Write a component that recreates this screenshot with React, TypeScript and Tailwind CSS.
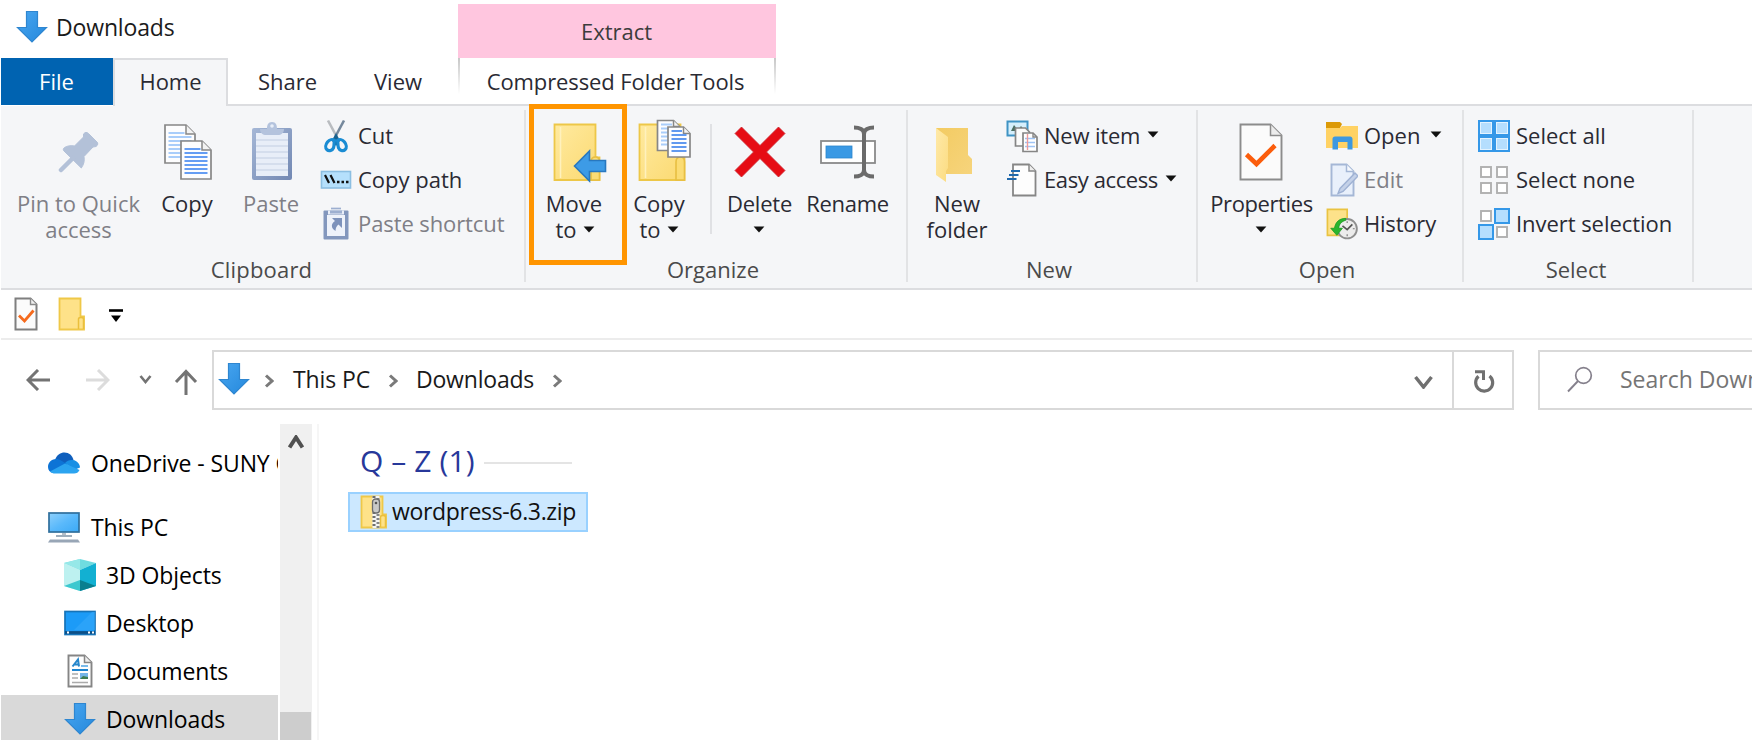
import type { ReactNode } from "react";

/* ---------- icons ---------- */

function DownArrow({ className = "" }: { className?: string }) {
  return (
    <svg width="32" height="34" viewBox="0 0 32 34" className={className}>
      <defs>
        <linearGradient id="dl" x1="0" y1="0" x2="1" y2="1">
          <stop offset="0" stopColor="#49a6f0" />
          <stop offset="1" stopColor="#2488dc" />
        </linearGradient>
      </defs>
      <path d="M10.500 1.500h11v16h9L16 32 1.500 17.500h9z" fill="url(#dl)" stroke="#2f86d0" strokeWidth="1.200" />
    </svg>
  );
}

function Caret({ className = "" }: { className?: string }) {
  return (
    <svg width="12" height="7" viewBox="0 0 12 7" className={className}>
      <path d="M.6.5h10.800L6 6.600z" fill="#111" />
    </svg>
  );
}

function PinIcon() {
  return (
    <svg width="42" height="42" viewBox="0 0 42 42">
      <path d="M25.500 3c1.500-2 3.500-2 5-.5l8.500 8.500c1.200 1.200 1 3.200-1 4.500l-3 .5-9 9.500c.8 4.500-.2 8-2.700 11.500L6 20c-1-1-1-2.500.5-3.500 3-1.800 6.500-2.200 10-1.500L25.500 6z" fill="#b3c1d8" stroke="#b3c1d8" strokeWidth="1" strokeLinejoin="round" />
      <path d="M15 27 3 39" stroke="#b3c1d8" strokeWidth="4.500" strokeLinecap="round" />
    </svg>
  );
}

function Sheet({ x, y, w, h, f, line = "#6ea2f2", n = 7, gap = 4, sw = 2 }: { x: number; y: number; w: number; h: number; f: number; line?: string; n?: number; gap?: number; sw?: number }) {
  const rows = Array.from({ length: n }, (_, i) => y + h - 6 - i * gap);
  return (
    <g>
      <path d={`M${x} ${y}h${w - f}l${f} ${f}v${h - f}h${-w}z`} fill="#fdfdfe" stroke="#878787" strokeWidth="1.700" />
      <path d={`M${x + w - f} ${y}v${f}h${f}`} fill="#f3f3f3" stroke="#878787" strokeWidth="1.500" />
      {rows.map((r, i) => (
        <path key={i} d={`M${x + 3.500} ${r}h${i === n - 1 ? w - f - 5 : w - 7}`} stroke={line} strokeWidth={sw} />
      ))}
    </g>
  );
}

function CopyIcon() {
  return (
    <svg width="50" height="58" viewBox="0 0 50 58">
      <Sheet x={2} y={2} w={30} h={38} f={9} line="#a9cdfa" />
      <Sheet x={18} y={18} w={30} h={38} f={9} line="#659df3" />
    </svg>
  );
}

function PasteIcon() {
  return (
    <svg width="42" height="60" viewBox="0 0 42 60">
      <defs>
        <linearGradient id="pb" x1="0" y1="0" x2="1" y2="1">
          <stop offset="0" stopColor="#a5b7d6" />
          <stop offset="1" stopColor="#7288b3" />
        </linearGradient>
      </defs>
      <rect x="1" y="7" width="40" height="52" rx="2" fill="url(#pb)" />
      <rect x="5" y="12" width="32" height="43" fill="#e8eef8" />
      {[19, 25, 31, 37, 43, 49].map((y) => (
        <path key={y} d={`M5 ${y}h32`} stroke="#cfd9ea" strokeWidth="1.500" />
      ))}
      <path d="M9 8h7c0-4 1-7 5-7s5 3 5 7h7c0 4-3 6-6 6H15c-3 0-6-2-6-6z" fill="#b4c3dd" />
      <circle cx="21" cy="5" r="1.800" fill="#e8eef8" />
    </svg>
  );
}

function CutIcon() {
  return (
    <svg width="32" height="34" viewBox="0 0 32 34">
      <path d="M8 1.500 19 22" stroke="#b9bcc0" strokeWidth="2.600" />
      <path d="M24 1.500 13 22" stroke="#75889c" strokeWidth="2.600" />
      <path d="M16 14l-4 8 4 5 4-5z" fill="#17618f" />
      <path d="M14.500 21.500c-2-1.500-5-1-7 1.500s-2.500 6-.5 7.800 5.500.5 6.500-2 .2-4.500 1-7.300zM17.500 21.500c2-1.500 5-1 7 1.500s2.500 6 .5 7.800-5.500.5-6.500-2-.2-4.500-1-7.300z" fill="none" stroke="#1a8cd3" strokeWidth="3.200" />
    </svg>
  );
}

function CopyPathIcon() {
  return (
    <svg width="32" height="20" viewBox="0 0 32 20">
      <rect x="1.500" y="1.500" width="29" height="16.500" fill="#b5e0fc" stroke="#8cbfe2" strokeWidth="1.600" />
      <path d="M5 5l4 8M10.500 5l4 8" stroke="#111" strokeWidth="2.200" />
      <path d="M17 12h2.500M21.500 12H24M26 12h2.500" stroke="#111" strokeWidth="2.400" />
    </svg>
  );
}

function PasteShortcutIcon() {
  return (
    <svg width="28" height="34" viewBox="0 0 28 34">
      <rect x="1.500" y="3.500" width="25" height="29" rx="1" fill="#8397bd" />
      <rect x="5" y="8" width="18" height="21" fill="#eef2fa" />
      <path d="M6 3.500h16v4H6z" fill="#e9eef8" />
      <path d="M8 3.500h12v3H8z" fill="#9dafd0" />
      <path d="M9 1.500h10" stroke="#9dafd0" strokeWidth="1.700" />
      <path d="M10 11h10v10l-3.500-3.500c-2 1.500-3 3.500-3 6.500-5-3-4.500-7.500-.5-10z" fill="#7d92bb" />
    </svg>
  );
}

function FolderBase({ w = 46 }: { w?: number }) {
  return (
    <g>
      <path d={`M1.500 1.500h41v33h${w - 42}v22.500h-${w - 1}z`} fill="url(#fold)" stroke="#edc748" strokeWidth="1.800" />
      <path d="M7.500 4v51" stroke="#fff1bd" strokeWidth="1.600" />
      <path d="M38 57V39c0-3 1.500-5 4.500-5s4 2 4 5v18z" fill="#fbdc74" stroke="#e8bf42" strokeWidth="1.600" />
    </g>
  );
}

const FoldGradient = () => (
  <defs>
    <linearGradient id="fold" x1="0" y1="0" x2="1" y2="1">
      <stop offset="0" stopColor="#ffeaa0" />
      <stop offset="1" stopColor="#fbd970" />
    </linearGradient>
  </defs>
);

function MoveIcon() {
  return (
    <svg width="54" height="60" viewBox="0 0 54 60">
      <FoldGradient />
      <FolderBase />
      <path d="M21.500 43 36.500 28v9.500h16v11h-16V58z" fill="#3d9be6" stroke="#2878bf" strokeWidth="1.600" />
    </svg>
  );
}

function CopyToIcon() {
  return (
    <svg width="54" height="62" viewBox="0 0 54 62">
      <FoldGradient />
      <g transform="translate(0 4)">
        <FolderBase />
      </g>
      <Sheet x={19.500} y={1.500} w={22} h={30} f={6} line="#a9cdfa" n={6} />
      <Sheet x={30} y={8} w={22} h={30} f={6.500} line="#6199ef" n={6} />
    </svg>
  );
}

function DeleteIcon() {
  return (
    <svg width="52" height="52" viewBox="0 0 52 52">
      <path d="M7.500 1 26 19.500 44.500 1 51 7.500 32.500 26 51 44.500 44.500 51 26 32.500 7.500 51 1 44.500 19.500 26 1 7.500z" fill="#e60c14" stroke="#c9222c" strokeWidth=".8" />
    </svg>
  );
}

function RenameIcon() {
  return (
    <svg width="58" height="54" viewBox="0 0 58 54">
      <rect x="2" y="16" width="54" height="22" fill="#fff" stroke="#8a8a8a" strokeWidth="1.800" />
      <rect x="7" y="21" width="26" height="12" fill="#3a99e4" stroke="#2c86cc" strokeWidth=".8" />
      <path d="M35 2.500c5.500 0 10 2 10 6.500v36c0 4.500-4.500 6.500-10 6.500M55 2.500c-5.500 0-10 2-10 6.500v36c0 4.500 4.500 6.500 10 6.500" fill="none" stroke="#6b6b6b" strokeWidth="4" />
    </svg>
  );
}

function NewFolderIcon() {
  return (
    <svg width="40" height="56" viewBox="0 0 40 56">
      <defs>
        <linearGradient id="nf" x1="0" y1="0" x2="1" y2="1">
          <stop offset="0" stopColor="#f3cb62" />
          <stop offset="1" stopColor="#f6d47c" />
        </linearGradient>
        <linearGradient id="nf2" x1="0" y1="0" x2="1" y2="1">
          <stop offset="0" stopColor="#ffe9a8" />
          <stop offset="1" stopColor="#fbdc82" />
        </linearGradient>
      </defs>
      <path d="M1 1h32v27l4 4v15H11z" fill="url(#nf)" />
      <path d="M1 1l12 9v31l-2 3v11L1 48z" fill="url(#nf2)" />
    </svg>
  );
}

function NewItemIcon() {
  return (
    <svg width="32" height="34" viewBox="0 0 32 34">
      <rect x="1.500" y="2.500" width="20" height="14" fill="#d5effc" stroke="#3f93c4" strokeWidth="2" />
      <path d="M5 12l3-6 4 5 3-4 4 5z" fill="#4b6f63" />
      <path d="M9.500 9h10l4 4v14h-14z" fill="#fbfbfb" stroke="#858585" strokeWidth="1.700" />
      <path d="M17 14h10l4 4v14.500H17z" fill="#fff" stroke="#858585" strokeWidth="1.700" />
      <path d="M19 19.500h10M19 23.500h10M19 27.500h10" stroke="#9fc4f5" strokeWidth="1.500" />
      <path d="M21.500 15v16" stroke="#ee9a9a" strokeWidth="1.400" />
      <path d="M27 14v4h4" fill="none" stroke="#858585" strokeWidth="1.400" />
    </svg>
  );
}

function EasyAccessIcon() {
  return (
    <svg width="32" height="34" viewBox="0 0 32 34">
      <path d="M7 1.500h16l6.500 6.500v24.500H7z" fill="#fdfdfd" stroke="#868686" strokeWidth="1.800" />
      <path d="M23 1.500V8h6.500" fill="#eee" stroke="#868686" strokeWidth="1.500" />
      <path d="M5 8h9M3 12h9.500M1 16h9.500" stroke="#1f69ad" strokeWidth="2.200" />
    </svg>
  );
}

function PropertiesIcon({ small = false }: { small?: boolean }) {
  return (
    <svg width={small ? 24 : 44} height={small ? 34 : 58} viewBox={small ? "0 0 24 34" : "0 0 44 58"}>
      {small ? (
        <>
          <path d="M1.500 1.500h15l6 6v25h-21z" fill="#fbfbfb" stroke="#7f7f7f" strokeWidth="2" />
          <path d="M16.500 1.500v6h6" fill="#eee" stroke="#8a8a8a" strokeWidth="1.400" />
          <path d="M5 18.500l5.500 5.500 9-10.500" fill="none" stroke="#f56a1d" strokeWidth="2.800" />
        </>
      ) : (
        <>
          <path d="M1.500 1.500h30l11 11v44h-41z" fill="#fbfbfb" stroke="#8c8c8c" strokeWidth="1.900" />
          <path d="M31.500 1.500v11h11" fill="#ececec" stroke="#8c8c8c" strokeWidth="1.500" />
          <path d="M7.500 31.500 17.500 41 36 22.500" fill="none" stroke="#fb5d0c" strokeWidth="4.600" />
        </>
      )}
    </svg>
  );
}

function OpenIcon() {
  return (
    <svg width="32" height="28" viewBox="0 0 32 28">
      <path d="M0 0h14l2 2-2 4H0z" fill="#dc9a08" />
      <path d="M0 6h14l2-2h16v22H0z" fill="#ffd264" />
      <path d="M6.500 27.500V17c0-1.500 1-2.500 2.500-2.500h15c1.500 0 2.500 1 2.500 2.500v10.500H21.500V20h-9.500v7.500z" fill="#3d98e0" />
    </svg>
  );
}

function EditIcon() {
  return (
    <svg width="32" height="34" viewBox="0 0 32 34">
      <path d="M5.500 1.500h15l7 7v24h-22z" fill="#e9f0fb" stroke="#a5b7d6" strokeWidth="1.900" />
      <path d="M20.500 1.500v7h7" fill="#f6f9fe" stroke="#a5b7d6" strokeWidth="1.500" />
      <path d="M12 30.500l2-5L29 10l3 3-15 15.500z" fill="#c4d1e8" stroke="#9eb1d3" strokeWidth="1.400" />
    </svg>
  );
}

function HistoryIcon() {
  return (
    <svg width="34" height="34" viewBox="0 0 34 34">
      <path d="M1.500 1.500h21v27.500h-21z" fill="#fde28a" stroke="#eac342" strokeWidth="1.800" />
      <circle cx="22.500" cy="22" r="10.300" fill="#ececec" stroke="#8f8f8f" strokeWidth="2" />
      <path d="M22.500 14v2M22.500 28v2M14.500 22h2M28.500 22h2" stroke="#777" strokeWidth="1.200" />
      <path d="M17.500 19l5 4 5.500-5.500" fill="none" stroke="#555" strokeWidth="1.800" />
      <path d="M21 11c-7 0-11 4-12 10.500H5l6.500 7.500 6-7.500h-4c.5-4 2.500-7 7.500-8.500z" fill="#2bb52e" stroke="#1b9a20" strokeWidth=".8" />
    </svg>
  );
}

const Sq = ({ x, y, on }: { x: number; y: number; on?: boolean }) =>
  on ? (
    <rect x={x + 1} y={y + 1} width="14" height="14" fill="#b5defe" stroke="#3598e8" strokeWidth="2" />
  ) : (
    <rect x={x + 3} y={y + 3} width="10" height="10" fill="#fff" stroke="#b0b0b0" strokeWidth="1.900" />
  );

function SelectIcon({ mode }: { mode: "all" | "none" | "invert" }) {
  return (
    <svg width="32" height="32" viewBox="0 0 32 32">
      {mode === "all" && (
        <>
          <rect width="32" height="32" fill="#3598e8" />
          {[2.500, 18.500].map((x) =>
            [2.500, 18.500].map((y) => (
              <rect key={`${x}-${y}`} x={x} y={y} width="11" height="11" fill="#b5defe" stroke="#e3f3ff" strokeWidth="1" />
            )),
          )}
        </>
      )}
      {mode !== "all" && (
        <>
          <Sq x={0} y={0} />
          <Sq x={16} y={0} on={mode === "invert"} />
          <Sq x={0} y={16} on={mode === "invert"} />
          <Sq x={16} y={16} />
        </>
      )}
    </svg>
  );
}

function SmallFolder({ zip = false }: { zip?: boolean }) {
  return (
    <svg width="28" height="34" viewBox="0 0 28 34">
      <path d="M1.500 1.500h21v18h3.500v13H1.500z" fill="#fee289" stroke="#efc848" strokeWidth="1.800" />
      <path d="M20.500 32V22c0-2 5-2 5 0v10" fill="none" stroke="#eabf3c" strokeWidth="1.500" />
      {zip && (
        <>
          <path d="M16 1v32" stroke="#f4f4f4" strokeWidth="7" />
          <path d="M14 1v32" stroke="#6f6f6f" strokeWidth="3" strokeDasharray="2 2" />
          <path d="M18 1v32" stroke="#858585" strokeWidth="3" strokeDasharray="2 2" strokeDashoffset="2" />
          <rect x="12.500" y="4" width="7" height="14" rx="3" fill="#c9c9c9" stroke="#6d6d6d" strokeWidth="1.300" />
          <circle cx="16" cy="8" r="1.300" fill="#555" />
        </>
      )}
    </svg>
  );
}

function OneDriveIcon() {
  return (
    <svg width="32" height="22" viewBox="0 0 32 22">
      <path d="M7 8C9 2.500 12.500.5 16.500.5c4.500 0 8 3 9 7.500L16 14z" fill="#0f5fbd" />
      <path d="M0 15c0-4 3-8 8-8 4 0 6.500 2.500 12 5.500L5 21C2 20.500 0 18 0 15z" fill="#0d74d6" />
      <path d="M17 11c2-2.500 5-3.500 8-3 4 .5 7 4 7 7.500L26 18z" fill="#188fe4" />
      <path d="M2 19.500l15-8 14.500 6.500c-1 2.500-3 3.500-5.500 3.500H7c-2 0-3.500-.5-5-2z" fill="#2ba4f0" />
    </svg>
  );
}

function PcIcon() {
  return (
    <svg width="32" height="32" viewBox="0 0 32 32">
      <defs>
        <linearGradient id="scr" x1="0" y1="0" x2="1" y2="1">
          <stop offset="0" stopColor="#8ed0fb" />
          <stop offset=".5" stopColor="#5ab9fb" />
          <stop offset="1" stopColor="#3ba9f6" />
        </linearGradient>
      </defs>
      <rect x="1" y="2" width="30" height="19" fill="url(#scr)" stroke="#2f6f9c" strokeWidth="1.700" />
      <path d="M14 22h4v2h-4z" fill="#b7c0c9" />
      <path d="M8 25h16" stroke="#94a5b5" strokeWidth="1.800" />
      <path d="M2 28.500h28l2 3H0z" fill="#98a6b6" />
    </svg>
  );
}

function CubeIcon() {
  return (
    <svg width="32" height="34" viewBox="0 0 32 34">
      <path d="M0 5 16 1l16 4-16 7z" fill="#6fdce0" />
      <path d="M0 5l16 7v21L0 28z" fill="#bdf1f0" />
      <path d="M32 5l-16 7v21l16-5z" fill="#12b0d2" />
      <path d="M0 28l16-6v11z" fill="#3cc8cf" />
      <path d="M32 28l-16-6v11z" fill="#0a7f8f" />
      <path d="M16 1 0 5l16 7z" fill="#96e8e8" />
    </svg>
  );
}

function DesktopIcon() {
  return (
    <svg width="32" height="26" viewBox="0 0 32 26">
      <rect x="1" y="1.500" width="30" height="23" fill="#1c9bf7" stroke="#1673b8" strokeWidth="1.700" />
      <path d="M10 20 28 2h3v18z" fill="#36a8fa" opacity=".6" />
      <path d="M1 22.500h30" stroke="#0d4f86" strokeWidth="2.800" />
      <path d="M3 22.500h2M24 22.500h2M28 22.500h2" stroke="#fff" strokeWidth="1.800" />
    </svg>
  );
}

function DocumentsIcon() {
  return (
    <svg width="26" height="34" viewBox="0 0 26 34">
      <path d="M1.500 1.500h16l7 7v24h-23z" fill="#fdfdfd" stroke="#858585" strokeWidth="1.900" />
      <path d="M17.500 1.500v7h7" fill="#eee" stroke="#858585" strokeWidth="1.500" />
      <path d="M5.500 12.500l5.500-7 1 7M7.500 10.500h4" fill="none" stroke="#2686cb" strokeWidth="2" />
      <path d="M14 12h7" stroke="#6ab3e8" strokeWidth="1.800" />
      <path d="M5 16h16" stroke="#1c84d0" strokeWidth="2" />
      <path d="M5 20h6M5 24h6M5 28.500h16" stroke="#aaa" strokeWidth="1.500" />
      <path d="M13 19h8v6h-8z" fill="#74b5e8" />
      <path d="M13 25l3-3 5 1v2z" fill="#3e7d52" />
    </svg>
  );
}

function Chevron({ dir, className = "", w = 10, h = 14, sw = 3 }: { dir: "right" | "down" | "up"; className?: string; w?: number; h?: number; sw?: number }) {
  const d =
    dir === "right"
      ? `M2 1.500L${w - 2} ${h / 2}L2 ${h - 1.500}`
      : dir === "down"
        ? `M1.500 2L${w / 2} ${h - 2}L${w - 1.500} 2`
        : `M1.500 ${h - 1.500}L${w / 2} 2.500L${w - 1.500} ${h - 1.500}`;
  return (
    <svg width={w} height={h} viewBox={`0 0 ${w} ${h}`} className={className}>
      <path d={d} fill="none" stroke="currentColor" strokeWidth={sw} />
    </svg>
  );
}

/* ---------- ribbon pieces ---------- */

function BigButton({ icon, className, children }: { icon: ReactNode; className: string; children: ReactNode }) {
  return (
    <div className={`flex shrink-0 flex-col items-center text-center ${className}`}>
      <div className="flex h-[84px] w-full justify-center">{icon}</div>
      <div className="flex flex-col items-center whitespace-nowrap leading-[26px]">{children}</div>
    </div>
  );
}

function SmallRow({ icon, label, caret = false, className = "" }: { icon: ReactNode; label: string; caret?: boolean; className?: string }) {
  return (
    <div className="flex h-11 items-center whitespace-nowrap">
      <div className="flex w-8 shrink-0 justify-center">{icon}</div>
      <span className={`ml-[6px] pb-px ${className}`}>{label}</span>
      {caret && <Caret className="mt-[-3px] ml-[7px]" />}
    </div>
  );
}

function Group({ label, className, labelClass = "", children }: { label: string; className: string; labelClass?: string; children: ReactNode }) {
  return (
    <section className={`relative flex shrink-0 flex-col ${className}`}>
      <div className="flex h-[150px]">{children}</div>
      <div className={`text-center leading-[26px] text-[#4a4a4a] ${labelClass}`}>{label}</div>
    </section>
  );
}

const Separator = () => <div className="mt-1 h-[172px] w-[2px] shrink-0 bg-[#e2e3e5]" />;

function Ribbon() {
  return (
    <div className="ml-px flex h-[184px] shrink-0 border-b-2 border-[#dcdde0] bg-[#f5f6f8] text-[22px] text-[#2a2a33]">
      <Group label="Clipboard" className="w-[523px]" labelClass="pr-[2px] tracking-[0.2px]">
        <BigButton icon={<div className="pt-[25px]"><PinIcon /></div>} className="w-[155px] text-[#7f7f86]">
          <span>Pin to Quick</span>
          <span>access</span>
        </BigButton>
        <BigButton icon={<div className="pt-[17px] pl-[2px]"><CopyIcon /></div>} className="ml-px w-[60px]">
          <span>Copy</span>
        </BigButton>
        <BigButton icon={<div className="pt-[15px] pl-[2px]"><PasteIcon /></div>} className="ml-3 w-[84px] text-[#7f7f86]">
          <span>Paste</span>
        </BigButton>
        <div className="ml-[7px] flex flex-col pt-2">
          <SmallRow icon={<CutIcon />} label="Cut" />
          <SmallRow icon={<CopyPathIcon />} label="Copy path" />
          <SmallRow icon={<PasteShortcutIcon />} label="Paste shortcut" className="tracking-[-0.1px] text-[#7f7f86]" />
        </div>
      </Group>
      <Separator />
      <Group label="Organize" className="w-[380px]" labelClass="pr-[6px]">
        <BigButton icon={<div className="pt-[17px] pl-[11px]"><MoveIcon /></div>} className="w-24">
          <span>Move</span>
          <span className="flex items-center gap-[6px] pl-[2px]">to<Caret /></span>
        </BigButton>
        <BigButton icon={<div className="pt-[13px] pl-[11px]"><CopyToIcon /></div>} className="w-[74px]">
          <span>Copy</span>
          <span className="flex items-center gap-[6px]">to<Caret /></span>
        </BigButton>
        <div className="mt-[18px] ml-[14px] h-[110px] w-[2px] shrink-0 bg-[#e0e1e4]" />
        <BigButton icon={<div className="pt-[20px]"><DeleteIcon /></div>} className="ml-[12px] w-[72px]">
          <span className="pr-px tracking-[-0.2px]">Delete</span>
          <Caret className="mt-[10px] mr-[2px]" />
        </BigButton>
        <BigButton icon={<div className="pt-[19px] pr-px"><RenameIcon /></div>} className="ml-[6px] w-[92px]">
          <span className="pr-px tracking-[-0.3px]">Rename</span>
        </BigButton>
        <div className="absolute top-[-2px] left-[3px] h-[161px] w-[98px] border-[5px] border-[#ff9500]" />
      </Group>
      <Separator />
      <Group label="New" className="w-[288px]" labelClass="pr-[6px]">
        <BigButton icon={<div className="pt-[21px] pr-[4px]"><NewFolderIcon /></div>} className="w-[98px]">
          <span>New</span>
          <span>folder</span>
        </BigButton>
        <div className="flex flex-col pt-2">
          <SmallRow icon={<NewItemIcon />} label="New item" caret className="tracking-[-0.2px]" />
          <SmallRow icon={<EasyAccessIcon />} label="Easy access" caret className="tracking-[-0.4px]" />
        </div>
      </Group>
      <Separator />
      <Group label="Open" className="w-[264px]" labelClass="pr-[6px]">
        <BigButton icon={<div className="pt-[17px] pr-px"><PropertiesIcon /></div>} className="w-[127px]">
          <span className="tracking-[-0.4px]">Properties</span>
          <Caret className="mt-[10px] mr-px" />
        </BigButton>
        <div className="ml-px flex flex-col pt-2">
          <SmallRow icon={<OpenIcon />} label="Open" caret className="pr-[3px]" />
          <SmallRow icon={<EditIcon />} label="Edit" className="text-[#7f7f86]" />
          <SmallRow icon={<HistoryIcon />} label="History" className="tracking-[-0.2px]" />
        </div>
      </Group>
      <Separator />
      <Group label="Select" className="w-[228px]" labelClass="pr-1">
        <div className="ml-[14px] flex flex-col pt-2">
          <SmallRow icon={<SelectIcon mode="all" />} label="Select all" />
          <SmallRow icon={<SelectIcon mode="none" />} label="Select none" />
          <SmallRow icon={<SelectIcon mode="invert" />} label="Invert selection" className="tracking-[-0.05px]" />
        </div>
      </Group>
      <Separator />
    </div>
  );
}

function Header() {
  return (
    <header className="flex h-[106px] shrink-0">
      <div className="flex w-[456px] shrink-0 flex-col">
        <div className="flex h-[58px] items-center pb-[3px] pl-4">
          <DownArrow className="mt-[-2px]" />
          <span className="ml-2 text-[23px] tracking-[-0.15px] text-[#1b1b1b]">Downloads</span>
        </div>
        <div className="ml-px flex h-12 text-[22px] text-[#2a2a33]">
          <div className="flex h-[47px] w-28 items-center justify-center bg-[#0063b1] pr-px text-white">File</div>
          <div className="flex w-[115px] items-center justify-center border-2 border-b-0 border-[#dcdde0] bg-[#f5f6f8] pb-[3px]">Home</div>
          <div className="flex flex-1 items-center border-b-2 border-[#dcdde0] pl-[30px]">
            <span className="w-[116px]">Share</span>
            <span>View</span>
          </div>
        </div>
      </div>
      <div className="flex flex-1 flex-col border-b-2 border-[#dcdde0] pt-1 pl-[2px] text-[22px] text-[#2a2a33]">
        <div className="flex h-[54px] w-[318px] items-center justify-center bg-[#ffc6df] pt-px pr-px text-[#3c3c3c]">
          Extract
        </div>
        <div className="flex h-[46px] w-[318px] justify-between">
          <div className="h-9 w-[2px] bg-linear-to-b from-[#c8c8c8] to-white" />
          <div className="flex items-center pr-[3px] tracking-[-0.1px] whitespace-nowrap">Compressed Folder Tools</div>
          <div className="h-9 w-[2px] bg-linear-to-b from-[#c8c8c8] to-white" />
        </div>
      </div>
    </header>
  );
}

function QuickAccess() {
  return (
    <div className="ml-px flex h-[50px] shrink-0 items-center border-b-2 border-[#ececec] pl-[13px]">
      <PropertiesIcon small />
      <div className="ml-5">
        <SmallFolder />
      </div>
      <svg width="14" height="14" viewBox="0 0 14 14" className="mt-[4px] ml-[23px]">
        <path d="M0 1.500h14" stroke="#000" strokeWidth="2.600" />
        <path d="M2 6.500h10L7 13z" fill="#000" />
      </svg>
    </div>
  );
}

function AddressRow() {
  return (
    <div className="flex h-[84px] shrink-0 items-start overflow-hidden pt-[10px]">
      <div className="flex h-[60px] w-[212px] shrink-0 items-center pl-[26px] text-[#737373]">
        <svg width="24" height="22" viewBox="0 0 24 22">
          <path d="M24 11H3M12 1 2 11l10 10" fill="none" stroke="currentColor" strokeWidth="3" />
        </svg>
        <svg width="24" height="22" viewBox="0 0 24 22" className="ml-9 text-[#dcdcdc]">
          <path d="M0 11h21M12 1l10 10-10 10" fill="none" stroke="currentColor" strokeWidth="3" />
        </svg>
        <Chevron dir="down" w={13} h={10} sw={2.600} className="mt-[-3px] ml-[29px]" />
        <svg width="24" height="26" viewBox="0 0 24 26" className="mt-[3px] ml-[22px]">
          <path d="M12 26V3M2 13 12 2.500 22 13" fill="none" stroke="currentColor" strokeWidth="3" />
        </svg>
      </div>
      <div className="flex h-[60px] w-[1302px] shrink-0 items-center border-2 border-[#d9d9d9] text-[23px] text-[#1a1a1a]">
        <DownArrow className="mt-[-3px] ml-1" />
        <Chevron dir="right" className="mt-px ml-[14px] text-[#7a7a7a]" />
        <span className="ml-[19px] w-[95px] pb-px tracking-[-0.1px]">This PC</span>
        <Chevron dir="right" className="mt-px text-[#7a7a7a]" />
        <span className="ml-[18px] w-[136px] pb-px tracking-[-0.2px]">Downloads</span>
        <Chevron dir="right" className="mt-px text-[#7a7a7a]" />
        <Chevron dir="down" w={19} h={14} sw={3.500} className="mt-[4px] ml-auto text-[#707070]" />
        <div className="ml-[19px] flex h-full w-[60px] items-center justify-center border-l-2 border-[#d9d9d9]">
          <svg width="24" height="26" viewBox="0 0 24 26" className="mt-px text-[#707070]">
            <path d="M18.500 8a8.500 8.500 0 1 1-11 0.300" fill="none" stroke="currentColor" strokeWidth="3.200" />
            <path d="M4 3.800h8.500V12" fill="none" stroke="currentColor" strokeWidth="3" />
          </svg>
        </div>
      </div>
      <div className="ml-6 flex h-[60px] w-[300px] shrink-0 items-center border-2 border-[#d9d9d9] pl-[27px] text-[23px] text-[#757575]">
        <svg width="26" height="28" viewBox="0 0 26 28">
          <circle cx="16.500" cy="9.500" r="7.800" fill="none" stroke="#85808c" strokeWidth="1.700" />
          <path d="M11 15 1 25.500" stroke="#85808c" strokeWidth="1.900" />
        </svg>
        <span className="ml-[27px] pb-px whitespace-nowrap">Search Downloads</span>
      </div>
    </div>
  );
}

function TreeItem({ icon, label, level = 1, selected = false }: { icon: ReactNode; label: string; level?: number; selected?: boolean }) {
  return (
    <div className={`flex h-12 shrink-0 items-center overflow-hidden whitespace-nowrap ${level === 1 ? "pl-[47px]" : "pl-[63px]"} ${selected ? "bg-[#d9d9d9]" : ""}`}>
      <div className="flex w-8 shrink-0 justify-center">{icon}</div>
      <span className={level === 1 ? "ml-[11px]" : "ml-[10px]"}>{label}</span>
    </div>
  );
}

function Sidebar() {
  return (
    <aside className="ml-px flex w-[318px] shrink-0 border-r-2 border-[#f6f6f6]">
      <div className="flex h-full w-[277px] shrink-0 flex-col overflow-hidden pt-[15px] text-[23px] tracking-[-0.1px] text-black">
        <TreeItem icon={<OneDriveIcon />} label="OneDrive - SUNY Geneseo" />
        <div className="h-4 shrink-0" />
        <TreeItem icon={<PcIcon />} label="This PC" />
        <TreeItem icon={<CubeIcon />} label="3D Objects" level={2} />
        <TreeItem icon={<DesktopIcon />} label="Desktop" level={2} />
        <TreeItem icon={<DocumentsIcon />} label="Documents" level={2} />
        <TreeItem icon={<DownArrow />} label="Downloads" level={2} selected />
      </div>
      <div className="ml-[2px] flex w-8 flex-col items-center justify-between bg-[#f0f0f0] pt-[11px] pr-px">
        <Chevron dir="up" w={16} h={14} sw={4} className="text-[#505050]" />
        <div className="h-[28px] w-full bg-[#cdcdcd]" />
      </div>
    </aside>
  );
}

function Files() {
  return (
    <main className="flex flex-1 flex-col pt-[16px] pl-[29px]">
      <div className="flex h-[44px] w-[224px] items-center pl-3">
        <span className="w-[124px] pb-[3px] text-[30px] tracking-[0.1px] whitespace-nowrap text-[#27389a]">Q – Z (1)</span>
        <div className="mt-[2px] h-[2px] flex-1 bg-[#e4e4e4]" />
      </div>
      <div className="mt-2 flex h-10 w-[240px] items-center border-2 border-[#99d1ff] bg-[#cce8ff] pl-[10px]">
        <SmallFolder zip />
        <span className="ml-[4px] pb-px text-[23px] tracking-[-0.35px] whitespace-nowrap text-[#111]">wordpress-6.3.zip</span>
      </div>
    </main>
  );
}

export default function App() {
  return (
    <div className="flex h-[740px] w-[1752px] flex-col overflow-hidden bg-white font-['Open_Sans','Noto_Sans',sans-serif]">
      <Header />
      <Ribbon />
      <QuickAccess />
      <AddressRow />
      <div className="flex min-h-0 flex-1">
        <Sidebar />
        <Files />
      </div>
    </div>
  );
}
